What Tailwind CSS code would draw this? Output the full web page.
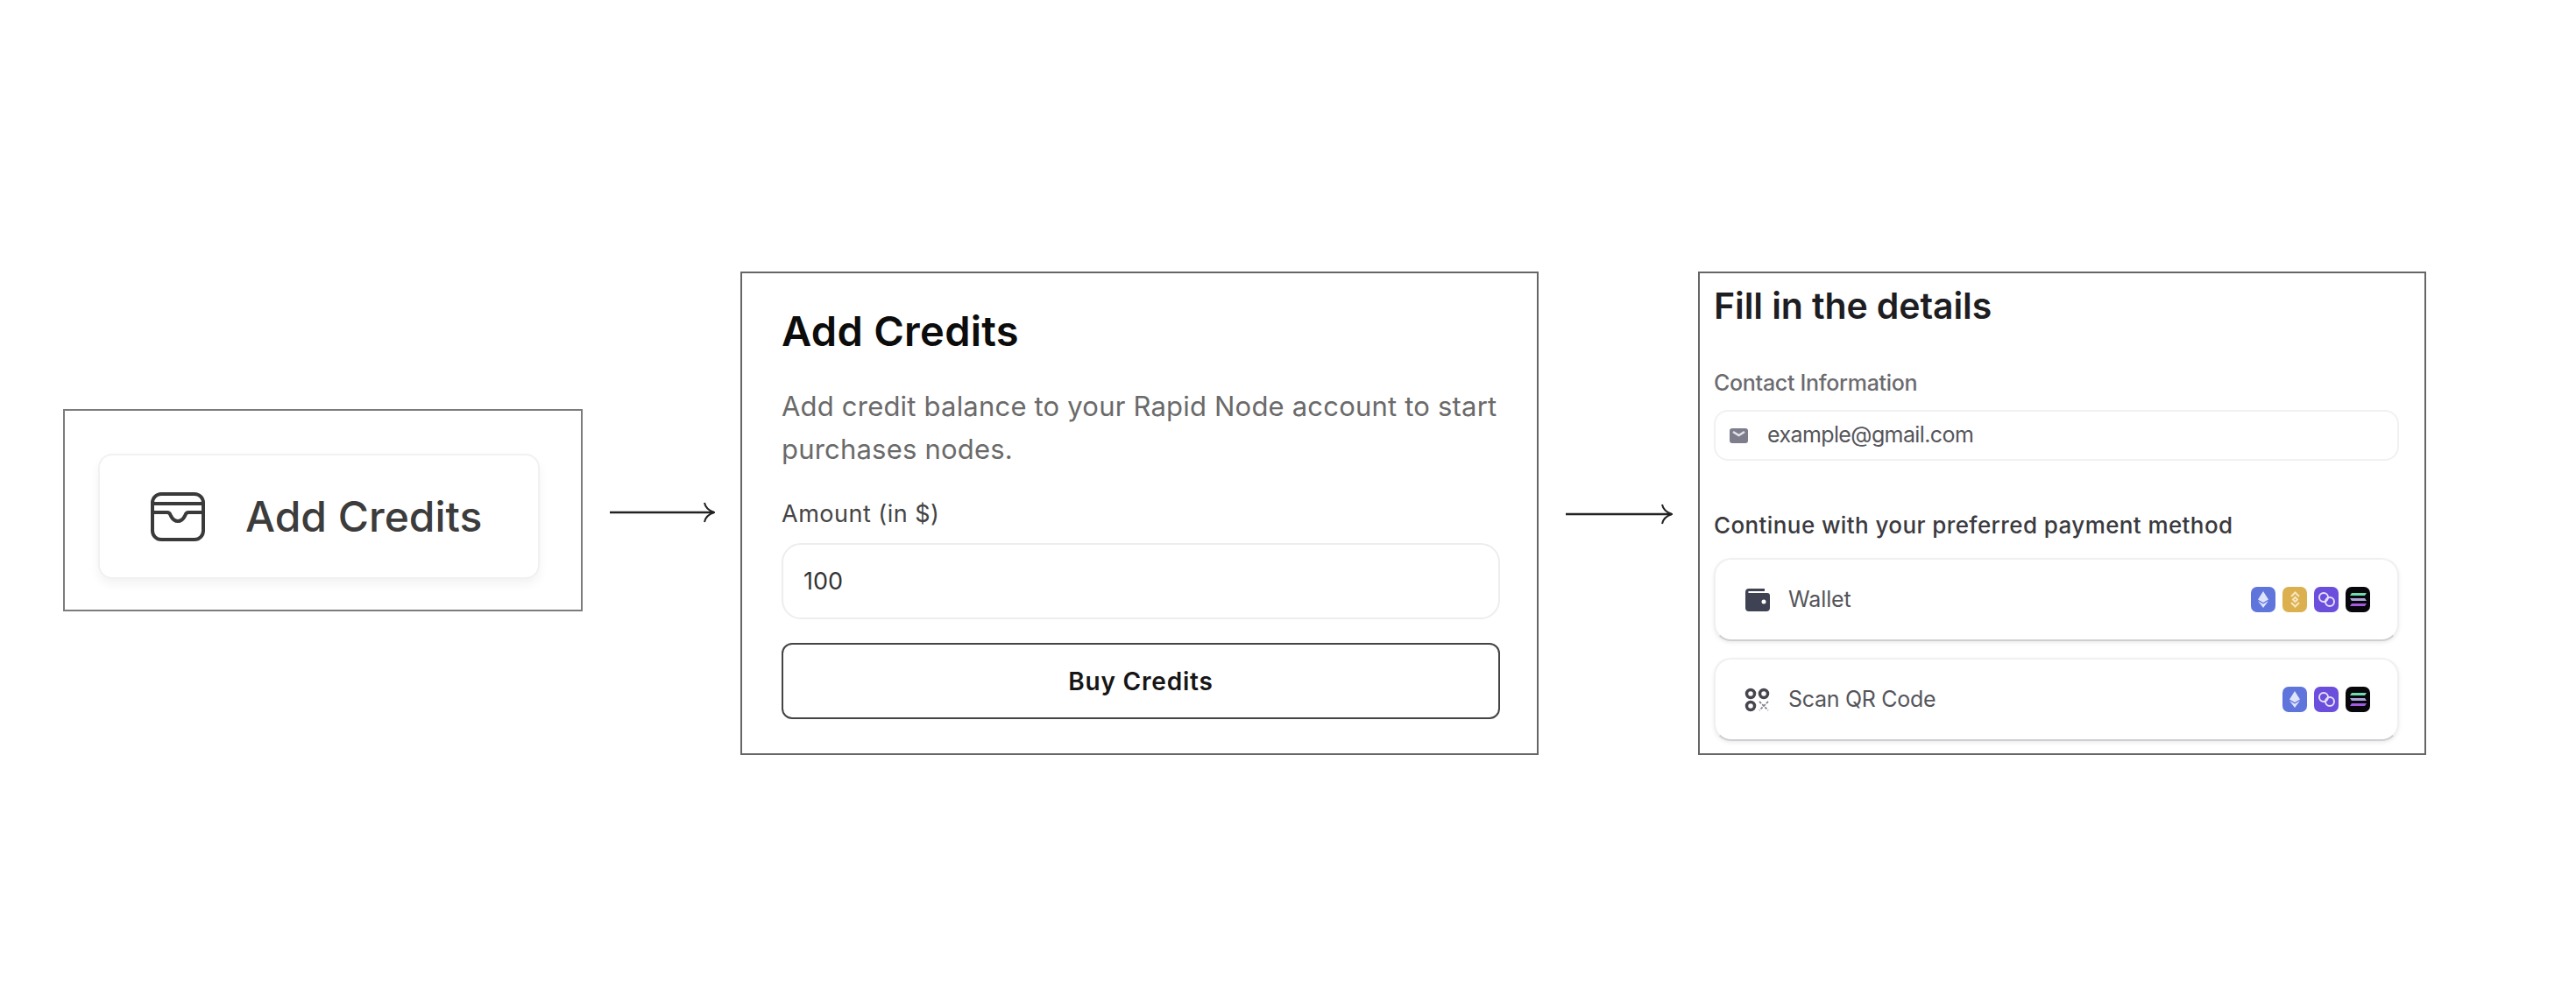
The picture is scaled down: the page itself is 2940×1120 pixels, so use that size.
<!DOCTYPE html>
<html lang="en">
<head>
    <meta charset="UTF-8">
    <title>Add Credits flow</title>
    <script src="https://cdn.jsdelivr.net/npm/@tailwindcss/browser@4"></script>
</head>
<body class="bg-white font-['Inter',sans-serif] min-h-screen">
    <div class="flex items-start pl-[72px] pt-[310px]">

        <!-- Step 1: button -->
        <div class="mt-[157px] w-[593px] h-[231px] border-2 border-[#7c7c7c] pl-[38px] pt-[49px] shrink-0">
            <div class="w-[504px] h-[143px] bg-white border-2 border-[#f1f1f1] rounded-[16px] shadow-[0_6px_12px_rgba(0,0,0,0.05)] flex items-center pl-[58px] gap-[46px]">
                <svg class="w-[62px] h-[56px]" viewBox="0 0 62 56" fill="none" stroke="#3a3a3a" stroke-width="4">
                    <rect x="2" y="2" width="58" height="52" rx="10" />
                    <path d="M2 13H60" />
                    <path d="M2 23H19c3 0 3 2 4 4 2 4 5 6 8 6s6-2 8-6c1-2 1-4 4-4H60" />
                </svg>
                <span class="text-[48px] leading-none font-medium text-[#3c3c3c]">Add Credits</span>
            </div>
        </div>

        <!-- Arrow -->
        <svg class="ml-[31px] mt-[263px] w-[120px] h-[24px] shrink-0" viewBox="0 0 120 24" fill="none" stroke="#222" stroke-width="2.500">
            <path d="M0 12H119" />
            <path d="M108 1c1 5 5 9 11 11-6 2-10 6-11 11" stroke-width="2" />
        </svg>

        <!-- Step 2: amount form -->
        <div class="ml-[29px] w-[911px] h-[552px] border-2 border-[#666] pl-[45px] pr-[44px] pt-[38px] shrink-0">
            <h1 class="text-[47px] leading-[56px] font-semibold text-[#0c0c0c] tracking-[0.3px]">Add Credits</h1>
            <p class="mt-[33px] text-[31px] leading-[49px] text-[#6a6a6a] tracking-[0.2px]">Add credit balance to your Rapid Node account to start<br>purchases nodes.</p>
            <div class="mt-[32px] text-[27px] leading-[36px] text-[#444] tracking-[0.5px]">Amount (in $)</div>
            <div class="mt-[15px] w-[820px] h-[87px] border-2 border-[#ededed] rounded-[22px] flex items-center pl-[23px] pt-[2px] text-[27px] text-[#333]">100</div>
            <div class="mt-[27px] w-[820px] h-[87px] border-2 border-[#444] rounded-[12px] flex items-center justify-center text-[28px] font-semibold text-[#161616] tracking-[0.8px]">Buy Credits</div>
        </div>

        <!-- Arrow -->
        <svg class="ml-[31px] mt-[265px] w-[122px] h-[24px] shrink-0" viewBox="0 0 122 24" fill="none" stroke="#222" stroke-width="2.500">
            <path d="M0 12H121" />
            <path d="M110 1c1 5 5 9 11 11-6 2-10 6-11 11" stroke-width="2" />
        </svg>

        <!-- Step 3: details -->
        <div class="ml-[29px] w-[831px] h-[552px] border-2 border-[#666] pl-[16px] pr-[29px] pt-[12px] shrink-0">
            <h2 class="text-[41px] leading-[50px] font-semibold text-[#1d1d22] tracking-[-0.1px]">Fill in the details</h2>
            <div class="mt-[47px] text-[25px] leading-[32px] font-medium text-[#6b6b70] tracking-[-0.3px]">Contact Information</div>
            <div class="mt-[15px] h-[58px] border-2 border-[#f1f1f3] rounded-[16px] flex items-center pl-[16px] gap-[22px] text-[25px] text-[#55555a] tracking-[-0.6px]">
                <svg class="w-[21px] h-[17px]" viewBox="0 0 21 17">
                    <rect width="21" height="17" rx="3" fill="#7d7d8c" />
                    <path d="M4 4l6.5 4L17 4" fill="none" stroke="#e4e4ea" stroke-width="2.5" />
                </svg>
                <span>example@gmail.com</span>
            </div>
            <div class="mt-[58px] text-[26px] leading-[32px] font-medium text-[#3a3a40] tracking-[0.4px] whitespace-nowrap">Continue with your preferred payment method</div>

            <!-- Wallet -->
            <div class="mt-[21px] h-[95px] bg-white border-2 border-[#f0f0f2] border-b-[#cfcfd3] rounded-[20px] shadow-[0_2px_4px_rgba(0,0,0,0.08)] flex items-center pl-[34px] pr-[31px]">
                <svg class="w-[28px] h-[26px]" viewBox="0 0 28 26">
                    <path d="M4 0H22V3H4C3 3 3 5 4 5H25C27 5 28 6 28 8V22C28 24.500 26.500 26 24 26H4C1.500 26 0 24.500 0 22V4C0 1.500 1.500 0 4 0Z" fill="#3f4252" />
                    <circle cx="21" cy="15" r="2.500" fill="#fff" />
                </svg>
                <span class="ml-[21px] text-[25px] text-[#55555a] tracking-[-0.1px]">Wallet</span>
                <div class="ml-auto flex gap-[8px]">
                    <div class="w-[28px] h-[29px] rounded-[7px] bg-[#5f75dc] flex items-center justify-center">
                        <svg class="w-[12px] h-[19px]" viewBox="0 0 12 19"><path d="M6 0L12 9.500 6 13 0 9.500ZM0 11l6 3.500L12 11 6 19Z" fill="#dfe4fa" /></svg>
                    </div>
                    <div class="w-[28px] h-[29px] rounded-[7px] bg-[#dcb04f] flex items-center justify-center">
                        <svg class="w-[19px] h-[19px]" viewBox="0 0 19 19" fill="none" stroke="#f6e7c0" stroke-width="2"><path d="M5 6l4.500-4.500L14 6M5 13l4.500 4.500L14 13M7 9.500l2.500-2.500 2.500 2.500-2.500 2.500Z" /></svg>
                    </div>
                    <div class="w-[28px] h-[29px] rounded-[7px] bg-[#6b4fdc] flex items-center justify-center">
                        <svg class="w-[21px] h-[19px]" viewBox="0 0 21 19" fill="none" stroke="#e5dffb" stroke-width="2"><circle cx="7" cy="7" r="5" /><circle cx="14" cy="12" r="5" /></svg>
                    </div>
                    <div class="w-[28px] h-[29px] rounded-[7px] bg-[#08080c] flex items-center justify-center">
                        <svg class="w-[19px] h-[15px]" viewBox="0 0 19 15"><path d="M2 0H19L17 3H0Z" fill="#6fdcb0" /><path d="M0 6H17L19 9H2Z" fill="#a9a5d8" /><path d="M2 12H19L17 15H0Z" fill="#a45be0" /></svg>
                    </div>
                </div>
            </div>

            <!-- Scan QR -->
            <div class="mt-[19px] h-[95px] bg-white border-2 border-[#f0f0f2] border-b-[#cfcfd3] rounded-[20px] shadow-[0_2px_4px_rgba(0,0,0,0.08)] flex items-center pl-[33px] pr-[31px]">
                <svg class="w-[29px] h-[28px]" viewBox="0 0 29 28" fill="none" stroke="#46464e" stroke-width="3.500">
                    <circle cx="7" cy="7" r="4.500" />
                    <circle cx="22" cy="7" r="4.500" />
                    <circle cx="7" cy="21" r="4.500" />
                    <path d="M17 16l10 10M27 16L17 26" stroke="#85858e" stroke-width="1.800" stroke-dasharray="3 1.500" />
                </svg>
                <span class="ml-[21px] text-[25px] text-[#55555a] tracking-[-0.3px]">Scan QR Code</span>
                <div class="ml-auto flex gap-[8px]">
                    <div class="w-[28px] h-[29px] rounded-[7px] bg-[#5f75dc] flex items-center justify-center">
                        <svg class="w-[12px] h-[19px]" viewBox="0 0 12 19"><path d="M6 0L12 9.500 6 13 0 9.500ZM0 11l6 3.500L12 11 6 19Z" fill="#dfe4fa" /></svg>
                    </div>
                    <div class="w-[28px] h-[29px] rounded-[7px] bg-[#6b4fdc] flex items-center justify-center">
                        <svg class="w-[21px] h-[19px]" viewBox="0 0 21 19" fill="none" stroke="#e5dffb" stroke-width="2"><circle cx="7" cy="7" r="5" /><circle cx="14" cy="12" r="5" /></svg>
                    </div>
                    <div class="w-[28px] h-[29px] rounded-[7px] bg-[#08080c] flex items-center justify-center">
                        <svg class="w-[19px] h-[15px]" viewBox="0 0 19 15"><path d="M2 0H19L17 3H0Z" fill="#6fdcb0" /><path d="M0 6H17L19 9H2Z" fill="#a9a5d8" /><path d="M2 12H19L17 15H0Z" fill="#a45be0" /></svg>
                    </div>
                </div>
            </div>
        </div>
    </div>
</body>
</html>
